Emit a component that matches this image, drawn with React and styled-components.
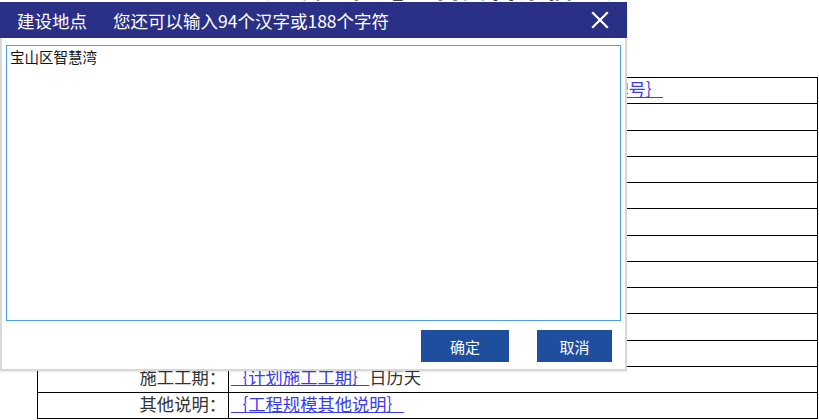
import React from "react";
import styled, { createGlobalStyle } from "styled-components";

const GlobalStyle = createGlobalStyle`
  html, body {
    margin: 0;
    padding: 0;
    background: #fff;
  }
  body {
    width: 819px;
    height: 420px;
    overflow: hidden;
    font-family: "Liberation Serif", "Noto Sans CJK SC", serif;
  }
`;

const rows = [
  { label: "工程地址：", value: "｛工程所在省市｝｛工程所在区县｝｛工程地址及门牌号｝" },
  { label: "", value: "" },
  { label: "", value: "" },
  { label: "", value: "" },
  { label: "", value: "" },
  { label: "", value: "" },
  { label: "", value: "" },
  { label: "", value: "" },
  { label: "", value: "" },
  { label: "", value: "" },
  { label: "", value: "" },
  { label: "施工工期：", value: "｛计划施工工期｝", suffix: "日历天" },
  { label: "其他说明：", value: "｛工程规模其他说明｝" },
];

function App() {
  return (
    <>
      <GlobalStyle />
      <Page>
        <Title>建设工程施工合同备案信息表</Title>
        <Sheet>
          <tbody>
            {rows.map((r, i) => (
              <tr key={i}>
                <LabelCell>{r.label}</LabelCell>
                <ValueCell>
                  {r.value && <Field href="#">{r.value}</Field>}
                  {r.suffix}
                </ValueCell>
              </tr>
            ))}
          </tbody>
        </Sheet>
      </Page>

      <Dialog>
        <Header>
          <HeaderTitle>建设地点</HeaderTitle>
          <HeaderHint>您还可以输入94个汉字或188个字符</HeaderHint>
          <Close aria-label="关闭">
            <svg width="18" height="18" viewBox="0 0 18 18">
              <path d="M2 2 L16 16 M16 2 L2 16" stroke="#fff" strokeWidth="2.2" strokeLinecap="square" />
            </svg>
          </Close>
        </Header>
        <Body>
          <Editor defaultValue="宝山区智慧湾" autoFocus />
        </Body>
        <Footer>
          <ActionButton $w={88}>确定</ActionButton>
          <ActionButton $w={75}>取消</ActionButton>
        </Footer>
      </Dialog>
    </>
  );
}

const Page = styled.div`
  position: relative;
  padding-left: 37px;
  width: 781px;
`;

const Title = styled.h1`
  margin: -30px 0 0 0;
  height: 33px;
  font-size: 28px;
  font-weight: bold;
  text-align: center;
  line-height: 33px;
  padding-left: 40px;
  color: #111;
  font-family: "Noto Sans CJK SC", sans-serif;
`;

const Sheet = styled.table`
  margin-top: 74px;
  width: 781px;
  border-collapse: collapse;
  font-size: 17.3px;
  td {
    border: 1px solid #000;
    height: 25.25px;
    padding: 0 2px;
    white-space: nowrap;
    line-height: 24px;
  }
`;

const LabelCell = styled.td`
  width: 186px;
  text-align: right;
  color: #333;
`;

const ValueCell = styled.td`
  text-align: left;
  color: #333;
`;

const Field = styled.a`
  color: #3b3bf0;
  text-decoration: underline;
`;

const Dialog = styled.div`
  position: absolute;
  left: 0;
  top: 2px;
  width: 623px;
  height: 367px;
  background: #fff;
  border: 2px solid #d8d8d8;
  border-top: none;
  display: flex;
  flex-direction: column;
  font-family: "Noto Sans CJK SC", sans-serif;
  box-shadow: 0 1px 2px rgba(0, 0, 0, 0.1);
`;

const Header = styled.div`
  height: 36px;
  margin: 0 -2px;
  background: #2b3087;
  color: #fff;
  display: flex;
  align-items: center;
  padding: 0 18px 0 17px;
`;

const HeaderTitle = styled.span`
  font-size: 17.5px;
  margin-right: 26px;
`;

const HeaderHint = styled.span`
  font-size: 17.5px;
  flex: 1;
`;

const Close = styled.span`
  display: flex;
  align-items: center;
  justify-content: center;
  width: 18px;
  height: 18px;
`;

const Body = styled.div`
  padding: 7px 4px 0 4px;
`;

const Editor = styled.textarea`
  display: block;
  box-sizing: border-box;
  width: 615px;
  height: 276px;
  margin: 0;
  border: 1px solid #4e9fe9;
  outline: none;
  resize: none;
  padding: 0 3px;
  font-family: "Noto Sans CJK SC", sans-serif;
  font-size: 14.5px;
  line-height: 21px;
  color: #111;
  caret-color: #000;
`;

const Footer = styled.div`
  display: flex;
  justify-content: flex-end;
  gap: 28px;
  padding: 9px 13px 0 0;
`;

const ActionButton = styled.button`
  width: ${(p) => p.$w}px;
  height: 32px;
  border: none;
  background: #1e4e9d;
  color: #fff;
  font-family: "Noto Sans CJK SC", sans-serif;
  font-size: 15px;
  padding: 0;
  cursor: pointer;
`;

export default App;
